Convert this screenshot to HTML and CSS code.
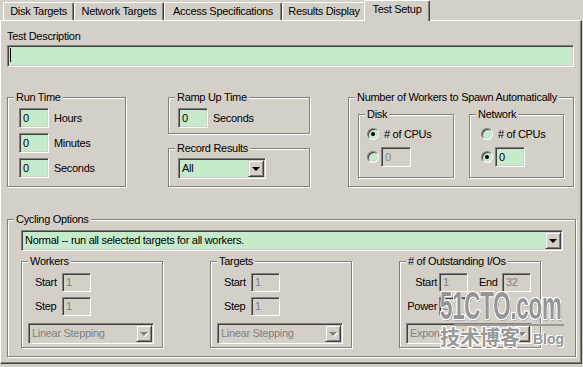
FILE: index.html
```html
<!DOCTYPE html>
<html lang="en">
<head>
    <meta charset="UTF-8">
    <meta name="viewport" content="width=device-width, initial-scale=1.0">
    <title>Iometer - Test Setup</title>
    <link rel="stylesheet" href="styles.css">
</head>
<body>
    <div class="tabs">
        <div class="tab tab-disk">Disk Targets</div>
        <div class="tab tab-net">Network Targets</div>
        <div class="tab tab-access">Access Specifications</div>
        <div class="tab tab-results">Results Display</div>
        <div class="tab tab-setup active">Test Setup</div>
    </div>

    <div class="panel">
        <div class="desc-label">Test Description</div>
        <div class="edit desc-edit"><span class="caret"></span></div>

        <div class="top-row">
            <fieldset class="group run-time">
                <legend>Run Time</legend>
                <div class="group-body">
                    <div class="time-row"><div class="edit num">0</div><span>Hours</span></div>
                    <div class="time-row"><div class="edit num">0</div><span>Minutes</span></div>
                    <div class="time-row"><div class="edit num">0</div><span>Seconds</span></div>
                </div>
            </fieldset>

            <div class="mid-col">
                <fieldset class="group ramp">
                    <legend>Ramp Up Time</legend>
                    <div class="group-body">
                        <div class="time-row"><div class="edit num">0</div><span>Seconds</span></div>
                    </div>
                </fieldset>
                <fieldset class="group record">
                    <legend>Record Results</legend>
                    <div class="group-body">
                        <div class="combo record-combo"><span class="combo-text">All</span><span class="combo-btn"></span></div>
                    </div>
                </fieldset>
            </div>

            <fieldset class="group spawn">
                <legend>Number of Workers to Spawn Automatically</legend>
                <div class="group-body spawn-row">
                    <fieldset class="group disk">
                        <legend>Disk</legend>
                        <div class="group-body">
                            <div class="radio-row"><span class="radio on"></span><span class="radio-label"># of CPUs</span></div>
                            <div class="radio-row"><span class="radio"></span><div class="edit num off">0</div></div>
                        </div>
                    </fieldset>
                    <fieldset class="group net">
                        <legend>Network</legend>
                        <div class="group-body">
                            <div class="radio-row"><span class="radio"></span><span class="radio-label"># of CPUs</span></div>
                            <div class="radio-row"><span class="radio on"></span><div class="edit num">0</div></div>
                        </div>
                    </fieldset>
                </div>
            </fieldset>
        </div>

        <fieldset class="group cycling">
            <legend>Cycling Options</legend>
            <div class="group-body">
                <div class="combo cycle-combo"><span class="combo-text">Normal -- run all selected targets for all workers.</span><span class="combo-btn"></span></div>
                <div class="cycle-row">
                    <fieldset class="group step-box">
                        <legend>Workers</legend>
                        <div class="group-body">
                            <div class="step-row"><span class="step-label">Start</span><div class="edit small off">1</div></div>
                            <div class="step-row"><span class="step-label">Step</span><div class="edit small off">1</div></div>
                            <div class="combo off step-combo"><span class="combo-text">Linear Stepping</span><span class="combo-btn"></span></div>
                        </div>
                    </fieldset>
                    <fieldset class="group step-box">
                        <legend>Targets</legend>
                        <div class="group-body">
                            <div class="step-row"><span class="step-label">Start</span><div class="edit small off">1</div></div>
                            <div class="step-row"><span class="step-label">Step</span><div class="edit small off">1</div></div>
                            <div class="combo off step-combo"><span class="combo-text">Linear Stepping</span><span class="combo-btn"></span></div>
                        </div>
                    </fieldset>
                    <fieldset class="group step-box io">
                        <legend># of Outstanding I/Os</legend>
                        <div class="group-body">
                            <div class="step-row">
                                <span class="step-label">Start</span><div class="edit small off">1</div>
                                <span class="end-label">End</span><div class="edit small off">32</div>
                            </div>
                            <div class="step-row"><span class="step-label">Power</span><div class="edit small off">2</div></div>
                            <div class="combo off step-combo"><span class="combo-text">Exponential Stepping</span><span class="combo-btn"></span></div>
                        </div>
                    </fieldset>
                </div>
            </div>
        </fieldset>

        <!-- site watermark stamped over the screenshot -->
        <div class="watermark">
            <div class="wm-logo">51CTO.com</div>
            <div class="wm-line"></div>
            <div class="wm-sub"><span class="wm-cn">技术博客</span><span class="wm-blog">Blog</span></div>
        </div>
    </div>
</body>
</html>
```

FILE: styles.css
```css
* {
    box-sizing: border-box;
}

body {
    margin: 0;
    width: 583px;
    height: 367px;
    overflow: hidden;
    background: #d4d0c8;
    font-family: "Liberation Sans", Arial, sans-serif;
    font-size: 11px;
    line-height: 13px;
    letter-spacing: -0.3px;
    color: #000;
}

/* tab strip */
.tabs {
    display: flex;
    align-items: flex-end;
    height: 20px;
    padding-left: 3px;
}
.tab {
    height: 18px;
    line-height: 17px;
    text-align: center;
    white-space: nowrap;
    border: 1px solid #fff;
    border-right-color: #404040;
    border-bottom: none;
    border-radius: 2px 2px 0 0;
    box-shadow: inset -1px 0 0 #808080;
}
.tab-disk { width: 71px; }
.tab-net { width: 90px; }
.tab-access { width: 118px; }
.tab-results { width: 84px; }
.tab-setup { width: 62px; }
.tab.active {
    position: relative;
    z-index: 1;
    width: 66px;
    height: 21px;
    margin: 0 -2px -1px;
    background: #d4d0c8;
}

/* page body of the tab control */
.panel {
    position: relative;
    width: 582px;
    height: 344px;
    padding-left: 6px;
    border: 1px solid;
    border-color: #fff #404040 #404040 #fff;
    box-shadow: inset -1px -1px 0 #808080;
}

.desc-label {
    margin-top: 9px;
}

/* sunken edit box */
.edit {
    height: 20px;
    padding: 0 3px;
    line-height: 18px;
    white-space: nowrap;
    background: #c6ebcb;
    border: 1px solid;
    border-color: #808080 #fff #fff #808080;
    box-shadow: inset 1px 1px 0 #404040, inset -1px -1px 0 #d4d0c8;
}
.edit.off {
    background: #d4d0c8;
    color: #808080;
}
.desc-edit {
    width: 567px;
    height: 22px;
    margin-top: 2px;
    padding: 2px 0 0 2px;
}
.caret {
    display: block;
    width: 1px;
    height: 14px;
    background: #000;
}
.edit.num {
    width: 30px;
}
.edit.small {
    width: 29px;
    height: 19px;
    line-height: 17px;
}

/* etched group boxes; contents are offset by .group-body so the caption stays put */
.group {
    margin: 0;
    padding: 0;
    min-width: 0;
    border: 1px solid #808080;
    box-shadow: 1px 1px 0 #fff, inset 1px 1px 0 #fff;
}
.group legend {
    margin-left: 6px;
    padding: 0 2px;
    line-height: 13px;
    background: #d4d0c8;
}

.top-row {
    display: flex;
    align-items: stretch;
    margin-top: 24px;
}

.run-time {
    width: 119px;
}
.run-time .group-body {
    padding: 4px 0 0 11px;
}
.time-row {
    display: flex;
    align-items: center;
    gap: 5px;
}
.time-row + .time-row {
    margin-top: 5px;
}

.mid-col {
    width: 142px;
    margin-left: 42px;
}
.ramp .group-body {
    padding: 4px 0 5px 9px;
}
.record {
    margin-top: 8px;
}
.record .group-body {
    padding: 3px 0 7px 9px;
}

/* drop-down combo */
.combo {
    display: flex;
    height: 21px;
    padding: 1px;
    background: #c6ebcb;
    border: 1px solid;
    border-color: #808080 #fff #fff #808080;
    box-shadow: inset 1px 1px 0 #404040, inset -1px -1px 0 #d4d0c8;
}
.combo-text {
    flex: 1;
    padding-left: 2px;
    line-height: 17px;
    white-space: nowrap;
    overflow: hidden;
}
.combo-btn {
    display: flex;
    align-items: center;
    justify-content: center;
    width: 16px;
    background: #d4d0c8;
    border: 1px solid;
    border-color: #d4d0c8 #404040 #404040 #d4d0c8;
    box-shadow: inset 1px 1px 0 #fff, inset -1px -1px 0 #808080;
}
.combo-btn::after {
    content: "";
    border-style: solid;
    border-width: 4px 4px 0;
    border-color: #000 transparent transparent;
    margin-top: 1px;
}
.combo.off {
    background: #d4d0c8;
    color: #808080;
}
.combo.off .combo-btn::after {
    border-top-color: #808080;
    filter: drop-shadow(1px 1px 0 #fff);
}
.record-combo {
    width: 88px;
}

.spawn {
    width: 226px;
    margin-left: 38px;
}
.spawn-row {
    display: flex;
    gap: 15px;
    padding: 4px 0 0 9px;
}
.disk {
    width: 96px;
}
.disk .group-body {
    padding: 0 0 10px 8px;
}
.net {
    width: 95px;
}
.net .group-body {
    padding: 0 0 10px 11px;
}
.radio-row {
    display: flex;
    align-items: center;
    height: 20px;
    margin-top: 3px;
}
.radio {
    position: relative;
    flex: none;
    width: 12px;
    height: 12px;
    margin-right: 2px;
    border-radius: 50%;
    background: #c6ebcb;
    border: 1px solid;
    border-color: #808080 #fff #fff #808080;
    box-shadow: inset 1px 1px 0 #404040, inset -1px -1px 0 #d4d0c8;
}
.radio.on::after {
    content: "";
    position: absolute;
    left: 3px;
    top: 3px;
    width: 4px;
    height: 4px;
    border-radius: 50%;
    background: #000;
}
.radio-label {
    margin-left: 3px;
}

.cycling {
    width: 569px;
    margin-top: 26px;
}
.cycling > .group-body {
    padding: 4px 0 8px 13px;
}
.cycle-combo {
    width: 542px;
}
.cycle-row {
    display: flex;
    gap: 47px;
    margin-top: 4px;
}
.step-box {
    width: 142px;
}
.step-box .group-body {
    padding: 0 0 3px 6px;
}
.step-row {
    display: flex;
    align-items: center;
    padding-left: 7px;
    margin-top: 5px;
}
.step-label {
    width: 27px;
}
.io .step-row {
    padding-left: 0;
}
.io .step-label {
    width: 33px;
    padding-right: 2px;
    text-align: right;
}
.end-label {
    width: 23px;
    margin-left: 11px;
}
.step-combo {
    width: 126px;
    margin-top: 7px;
}

/* 51CTO stamp */
.watermark {
    position: absolute;
    left: 439px;
    top: 269px;
    width: 130px;
    letter-spacing: 0;
    pointer-events: none;
}
.wm-logo {
    font-weight: bold;
    font-size: 38px;
    line-height: 32px;
    letter-spacing: -0.5px;
    color: #959595;
    transform: scaleX(0.59);
    transform-origin: left center;
    white-space: nowrap;
    text-shadow: 1px 0 #fff, -1px 0 #fff, 0 1px #fff, 0 -1px #fff,
        1px 1px #fff, -1px -1px #fff, 1px -1px #fff, -1px 1px #fff,
        2px 2px #b0b0b0;
}
.wm-line {
    width: 110px;
    height: 2px;
    margin: 2px 0 0 14px;
    background: #9a9a9a;
}
.wm-sub {
    display: flex;
    align-items: flex-end;
    gap: 13px;
}
.wm-cn {
    font-family: "Noto Sans CJK SC", sans-serif;
    font-weight: bold;
    font-size: 20px;
    line-height: 22px;
    color: #999;
    text-shadow: 1px 0 #fff, -1px 0 #fff, 0 1px #fff, 0 -1px #fff,
        1px 1px #fff, -1px -1px #fff, 1px -1px #fff, -1px 1px #fff;
}
.wm-blog {
    font-weight: bold;
    font-size: 14px;
    line-height: 18px;
    color: #959595;
    text-shadow: 1px 1px #fff, -1px -1px #fff;
}
```
